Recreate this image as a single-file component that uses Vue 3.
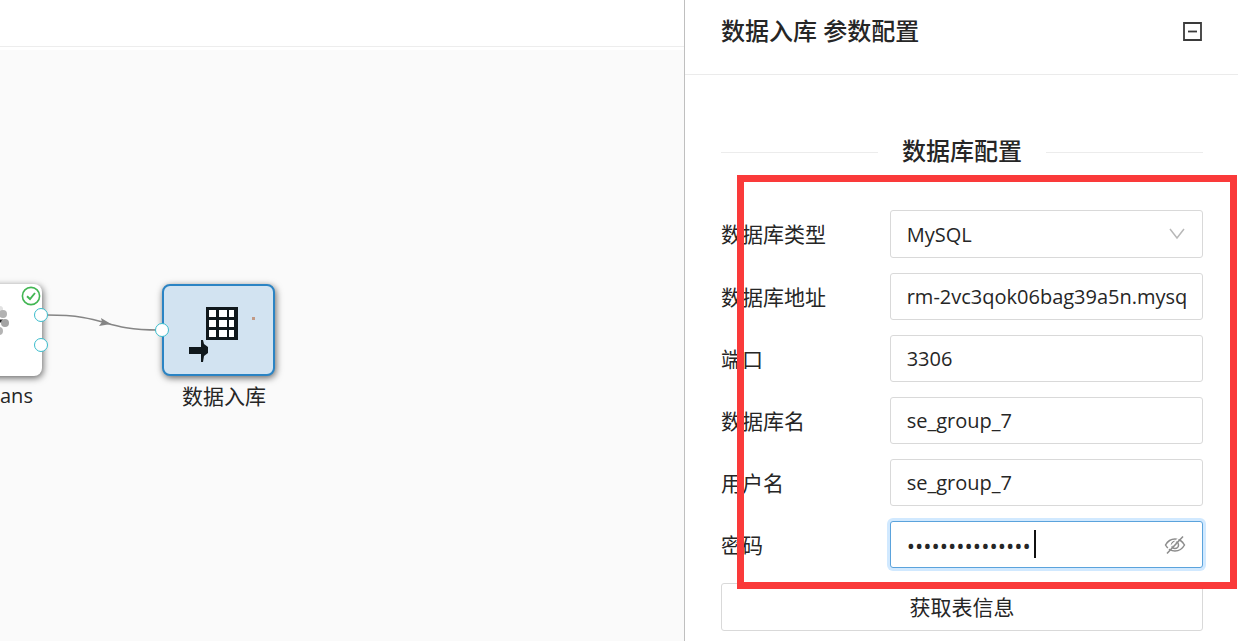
<script setup>
import { reactive } from 'vue'

const form = reactive({
  type: 'MySQL',
  host: 'rm-2vc3qok06bag39a5n.mysq',
  port: '3306',
  database: 'se_group_7',
  user: 'se_group_7',
  password: 'abcdefghijklmno',
})

const textFields = [
  { key: 'host', label: '数据库地址' },
  { key: 'port', label: '端口' },
  { key: 'database', label: '数据库名' },
  { key: 'user', label: '用户名' },
]
</script>

<template>
  <div class="page">
    <main class="workspace">
      <div class="toolbar"></div>
      <div class="canvas">
        <div class="node node-means">
          <svg class="dots" width="12" height="36" viewBox="0 0 12 36">
            <circle cx="0" cy="7" r="3" fill="#e2e2e2" />
            <circle cx="3" cy="12" r="4" fill="#b2b2b2" />
            <path d="M0 19H3" stroke="#222" stroke-width="3" />
            <circle cx="5" cy="21" r="4" fill="#a4a4a4" />
            <circle cx="-1" cy="29" r="4" fill="#b4b4b4" />
          </svg>
          <svg class="done" width="20" height="20" viewBox="0 0 20 20" fill="none" stroke="#42b653">
            <circle cx="10" cy="10" r="8.6" stroke-width="1.6" />
            <path d="M6 10.2L9 13L14 7" stroke-width="1.9" />
          </svg>
        </div>
        <div class="caption caption-means">ans</div>

        <svg class="edge" width="124" height="24" viewBox="0 0 124 24">
          <path d="M6 4C68 4 60 19 118 19" fill="none" stroke="#858585" stroke-width="1.5" />
          <path d="M60 7L70 13L58 15L61 11Z" fill="#858585" />
        </svg>

        <div class="node node-store">
          <svg class="store-icon" width="80" height="64" viewBox="0 0 80 64">
            <path d="M24 6H56V39H24Z" fill="#10181c" />
            <path
              d="M27 9h7v7h-7zM37 9h8v7h-8zM47 9h5v7h-5zM27 19h7v7h-7zM37 19h8v7h-8zM47 19h5v7h-5zM27 29h7v7h-7zM37 29h8v7h-8zM47 29h5v7h-5z"
              fill="#fff"
            />
            <path d="M7 46H19V39H21L22 43L26 46V52L22 55L21 61H19V53H7Z" fill="#10181c" />
            <path d="M70 16H73V19H70Z" fill="#c29a86" />
          </svg>
        </div>
        <div class="caption caption-store">数据入库</div>

        <i class="port port-a"></i>
        <i class="port port-b"></i>
        <i class="port port-c"></i>
      </div>
    </main>

    <aside class="panel">
      <header class="panel-head">
        <h1>数据入库 参数配置</h1>
        <button class="collapse" type="button" aria-label="收起">
          <svg width="20" height="20" viewBox="0 0 20 20" fill="none" stroke="#3a3a3a">
            <path d="M1 1H18V18H1Z" stroke-width="1.8" />
            <path d="M5 9.5H14" stroke-width="1.8" />
          </svg>
        </button>
      </header>

      <form class="panel-body" @submit.prevent>
        <h2 class="divider"><span>数据库配置</span></h2>

        <div class="fields">
          <div class="row">
            <label for="type">数据库类型</label>
            <div class="control">
              <select id="type" v-model="form.type" class="box tall">
                <option>MySQL</option>
              </select>
              <svg class="suffix" width="18" height="18" viewBox="0 0 18 18" fill="none" stroke="#b8b8b8">
                <path d="M2 4L9 13L16 4" stroke-width="1.5" />
              </svg>
            </div>
          </div>

          <div v-for="f in textFields" :key="f.key" class="row">
            <label :for="f.key">{{ f.label }}</label>
            <div class="control">
              <input :id="f.key" v-model="form[f.key]" class="box" type="text" />
            </div>
          </div>

          <div class="row">
            <label for="password">密码</label>
            <div class="control">
              <input id="password" v-model="form.password" class="box active" type="password" />
              <span class="caret"></span>
              <svg class="suffix eye" width="22" height="20" viewBox="0 0 22 20" fill="none" stroke="#8c8c8c">
                <path d="M1.5 10C6 2 16 2 20.5 10C16 18 6 18 1.5 10Z" stroke-width="1.5" />
                <circle cx="11" cy="10" r="3.5" stroke-width="1.5" />
                <path d="M18 0L1 17" stroke="#fff" stroke-width="1.5" />
                <path d="M19 1.5L3 18.5" stroke-width="1.6" />
              </svg>
            </div>
          </div>

          <div class="highlight"></div>
        </div>

        <button class="fetch" type="button">获取表信息</button>
      </form>
    </aside>
  </div>
</template>

<style>
body {
  margin: 0;
  overflow: hidden;
}
</style>

<style scoped>
.page {
  display: flex;
  height: 100vh;
  color: #262626;
  background: #fff;
  font-family: "Open Sans", "Noto Sans CJK SC", sans-serif;
  font-size: 21px;
}
.page * {
  box-sizing: border-box;
}
.workspace {
  flex: 1;
  min-width: 0;
  display: flex;
  flex-direction: column;
}
.toolbar {
  height: 47px;
  border-bottom: 1px solid #ededed;
}
.canvas {
  position: relative;
  flex: 1;
  overflow: hidden;
  margin-top: 3px;
  background: #fafafa;
}
.node {
  position: absolute;
  top: 234px;
  width: 113px;
  height: 92px;
  border-radius: 8px;
  background: #fff;
  box-shadow: 1px 2px 7px rgba(0, 0, 0, 0.6);
}
.node-means {
  left: -71px;
}
.node-store {
  left: 162px;
  border: 2px solid #2b84c4;
  background: #d2e3f1;
}
.dots {
  position: absolute;
  left: 71px;
  top: 18px;
}
.done {
  position: absolute;
  right: 1px;
  top: 2px;
}
.store-icon {
  position: absolute;
  left: 18px;
  top: 15px;
}
.caption {
  position: absolute;
  top: 332px;
  line-height: 28px;
  white-space: nowrap;
}
.caption-means {
  left: 0;
  font-size: 20px;
}
.caption-store {
  left: 182px;
}
.edge {
  position: absolute;
  left: 41px;
  top: 261px;
}
.port {
  position: absolute;
  width: 14px;
  height: 14px;
  border: 1px solid #39bccc;
  border-radius: 50%;
  background: #fff;
}
.port-a {
  left: 34px;
  top: 258px;
}
.port-b {
  left: 34px;
  top: 288px;
}
.port-c {
  left: 155px;
  top: 273px;
}
.panel {
  flex: 0 0 554px;
  border-left: 1px solid #bfbfbf;
}
.panel-head {
  display: flex;
  align-items: center;
  justify-content: space-between;
  height: 75px;
  padding: 0 35px 10px 36px;
  border-bottom: 1px solid #ebebeb;
}
h1,
h2 {
  margin: 0;
  font-size: 24px;
  font-weight: 500;
  line-height: 36px;
  font-family: "Noto Sans", "Noto Sans CJK SC", sans-serif;
}
h1,
.divider span {
  padding-bottom: 2px;
}
.collapse {
  display: flex;
  padding: 0;
  border: 0;
  background: none;
}
.panel-body {
  padding: 58px 35px 0 36px;
}
.divider {
  display: flex;
  align-items: center;
  gap: 24px;
}
.divider::before,
.divider::after {
  content: "";
  flex: 1;
  height: 1px;
  background: #ececec;
}
.fields {
  position: relative;
  display: flex;
  flex-direction: column;
  gap: 15px;
  margin-top: 39px;
}
.row {
  display: grid;
  grid-template-columns: 7fr 13fr;
  align-items: center;
}
label {
  padding-bottom: 2px;
}
.control {
  position: relative;
  min-width: 0;
}
.box {
  display: block;
  width: 100%;
  height: 47px;
  padding: 0 16px;
  border: 1px solid #d9d9d9;
  border-radius: 3px;
  outline: 0;
  background: #fff;
  color: #262626;
  font-family: "Open Sans", "Noto Sans CJK SC", sans-serif;
  font-size: 20px;
  appearance: none;
}
.tall {
  height: 48px;
}
.active {
  border-color: #5ba3dc;
  box-shadow: 0 0 0 3px #d1e9ff;
  font-size: 22px;
}
.suffix {
  position: absolute;
  top: 15px;
  right: 17px;
  pointer-events: none;
}
.eye {
  top: 14px;
}
.caret {
  position: absolute;
  top: 9px;
  left: 144px;
  width: 2px;
  height: 28px;
  background: #111;
}
.highlight {
  position: absolute;
  inset: -35px -34px -21px 16px;
  border: 7px solid #fa3a3a;
  pointer-events: none;
}
.fetch {
  display: block;
  width: 100%;
  height: 48px;
  margin-top: 15px;
  padding: 0 0 2px;
  border: 1px solid #d9d9d9;
  border-radius: 3px;
  background: #fff;
  color: #262626;
  font-family: "Noto Sans CJK SC", sans-serif;
  font-size: 21px;
}
</style>
